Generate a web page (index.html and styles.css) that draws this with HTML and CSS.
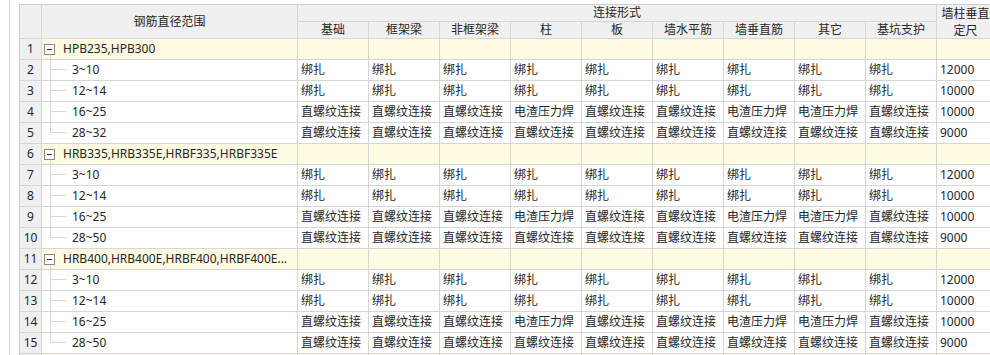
FILE: index.html
```html
<!DOCTYPE html>
<html lang="zh">
<head>
<meta charset="utf-8">
<title>钢筋连接设置</title>
<link rel="stylesheet" href="styles.css">
</head>
<body>
<div class="page">
  <div class="divider"></div>
  <div class="grid">
    <div class="c h corner"></div>
    <div class="c h htree">钢筋直径范围</div>
    <div class="c h hgroup">连接形式</div>
    <div class="c h hlast">墙柱垂直定尺</div>
    <div class="c h">基础</div>
    <div class="c h">框架梁</div>
    <div class="c h">非框架梁</div>
    <div class="c h">柱</div>
    <div class="c h">板</div>
    <div class="c h">墙水平筋</div>
    <div class="c h">墙垂直筋</div>
    <div class="c h">其它</div>
    <div class="c h">基坑支护</div>

    <!-- group 1 -->
    <div class="c n">1</div>
    <div class="c g tg"><span class="box"></span><span class="gt">HPB235,HPB300</span></div>
    <div class="c g"></div><div class="c g"></div><div class="c g"></div><div class="c g"></div><div class="c g"></div><div class="c g"></div><div class="c g"></div><div class="c g"></div><div class="c g"></div><div class="c g"></div>

    <div class="c n">2</div><div class="c t">3~10</div>
    <div class="c">绑扎</div><div class="c">绑扎</div><div class="c">绑扎</div><div class="c">绑扎</div><div class="c">绑扎</div><div class="c">绑扎</div><div class="c">绑扎</div><div class="c">绑扎</div><div class="c">绑扎</div><div class="c">12000</div>

    <div class="c n">3</div><div class="c t">12~14</div>
    <div class="c">绑扎</div><div class="c">绑扎</div><div class="c">绑扎</div><div class="c">绑扎</div><div class="c">绑扎</div><div class="c">绑扎</div><div class="c">绑扎</div><div class="c">绑扎</div><div class="c">绑扎</div><div class="c">10000</div>

    <div class="c n">4</div><div class="c t">16~25</div>
    <div class="c">直螺纹连接</div><div class="c">直螺纹连接</div><div class="c">直螺纹连接</div><div class="c">电渣压力焊</div><div class="c">直螺纹连接</div><div class="c">直螺纹连接</div><div class="c">电渣压力焊</div><div class="c">电渣压力焊</div><div class="c">直螺纹连接</div><div class="c">10000</div>

    <div class="c n">5</div><div class="c t last">28~32</div>
    <div class="c">直螺纹连接</div><div class="c">直螺纹连接</div><div class="c">直螺纹连接</div><div class="c">直螺纹连接</div><div class="c">直螺纹连接</div><div class="c">直螺纹连接</div><div class="c">直螺纹连接</div><div class="c">直螺纹连接</div><div class="c">直螺纹连接</div><div class="c">9000</div>

    <!-- group 2 -->
    <div class="c n">6</div>
    <div class="c g tg"><span class="box"></span><span class="gt">HRB335,HRB335E,HRBF335,HRBF335E</span></div>
    <div class="c g"></div><div class="c g"></div><div class="c g"></div><div class="c g"></div><div class="c g"></div><div class="c g"></div><div class="c g"></div><div class="c g"></div><div class="c g"></div><div class="c g"></div>

    <div class="c n">7</div><div class="c t">3~10</div>
    <div class="c">绑扎</div><div class="c">绑扎</div><div class="c">绑扎</div><div class="c">绑扎</div><div class="c">绑扎</div><div class="c">绑扎</div><div class="c">绑扎</div><div class="c">绑扎</div><div class="c">绑扎</div><div class="c">12000</div>

    <div class="c n">8</div><div class="c t">12~14</div>
    <div class="c">绑扎</div><div class="c">绑扎</div><div class="c">绑扎</div><div class="c">绑扎</div><div class="c">绑扎</div><div class="c">绑扎</div><div class="c">绑扎</div><div class="c">绑扎</div><div class="c">绑扎</div><div class="c">10000</div>

    <div class="c n">9</div><div class="c t">16~25</div>
    <div class="c">直螺纹连接</div><div class="c">直螺纹连接</div><div class="c">直螺纹连接</div><div class="c">电渣压力焊</div><div class="c">直螺纹连接</div><div class="c">直螺纹连接</div><div class="c">电渣压力焊</div><div class="c">电渣压力焊</div><div class="c">直螺纹连接</div><div class="c">10000</div>

    <div class="c n">10</div><div class="c t last">28~50</div>
    <div class="c">直螺纹连接</div><div class="c">直螺纹连接</div><div class="c">直螺纹连接</div><div class="c">直螺纹连接</div><div class="c">直螺纹连接</div><div class="c">直螺纹连接</div><div class="c">直螺纹连接</div><div class="c">直螺纹连接</div><div class="c">直螺纹连接</div><div class="c">9000</div>

    <!-- group 3 -->
    <div class="c n">11</div>
    <div class="c g tg"><span class="box"></span><span class="gt">HRB400,HRB400E,HRBF400,HRBF400E...</span></div>
    <div class="c g"></div><div class="c g"></div><div class="c g"></div><div class="c g"></div><div class="c g"></div><div class="c g"></div><div class="c g"></div><div class="c g"></div><div class="c g"></div><div class="c g"></div>

    <div class="c n">12</div><div class="c t">3~10</div>
    <div class="c">绑扎</div><div class="c">绑扎</div><div class="c">绑扎</div><div class="c">绑扎</div><div class="c">绑扎</div><div class="c">绑扎</div><div class="c">绑扎</div><div class="c">绑扎</div><div class="c">绑扎</div><div class="c">12000</div>

    <div class="c n">13</div><div class="c t">12~14</div>
    <div class="c">绑扎</div><div class="c">绑扎</div><div class="c">绑扎</div><div class="c">绑扎</div><div class="c">绑扎</div><div class="c">绑扎</div><div class="c">绑扎</div><div class="c">绑扎</div><div class="c">绑扎</div><div class="c">10000</div>

    <div class="c n">14</div><div class="c t">16~25</div>
    <div class="c">直螺纹连接</div><div class="c">直螺纹连接</div><div class="c">直螺纹连接</div><div class="c">电渣压力焊</div><div class="c">直螺纹连接</div><div class="c">直螺纹连接</div><div class="c">电渣压力焊</div><div class="c">电渣压力焊</div><div class="c">直螺纹连接</div><div class="c">10000</div>

    <div class="c n">15</div><div class="c t last">28~50</div>
    <div class="c">直螺纹连接</div><div class="c">直螺纹连接</div><div class="c">直螺纹连接</div><div class="c">直螺纹连接</div><div class="c">直螺纹连接</div><div class="c">直螺纹连接</div><div class="c">直螺纹连接</div><div class="c">直螺纹连接</div><div class="c">直螺纹连接</div><div class="c">9000</div>

    <!-- next group row, only its top edge is in view -->
    <div class="c n"></div>
    <div class="c g"></div>
    <div class="c g"></div><div class="c g"></div><div class="c g"></div><div class="c g"></div><div class="c g"></div><div class="c g"></div><div class="c g"></div><div class="c g"></div><div class="c g"></div><div class="c g"></div>
  </div>
</div>
</body>
</html>
```

FILE: styles.css
```css
html, body {
  margin: 0;
  padding: 0;
  background: #ffffff;
  overflow: hidden;
}

.page {
  display: flex;
  height: 355px;
  overflow: hidden;
  font-family: "Noto Sans", "Noto Sans CJK SC", sans-serif;
  font-size: 12px;
  color: #262626;
}

.divider {
  width: 1px;
  margin-left: 9px;
  background: #d6d6d6;
  flex-shrink: 0;
}

.grid {
  flex-shrink: 0;
  align-self: flex-start;
  margin: 4px 0 0 9px;
  display: grid;
  grid-template-columns: 22px 256px repeat(9, 71px) 58px;
  grid-template-rows: 17px 17px;
  grid-auto-rows: 21px;
  border-left: 1px solid #cfcfcf;
  border-top: 1px solid #cfcfcf;
}

.c {
  box-sizing: border-box;
  border-right: 1px solid #d6d6d6;
  border-bottom: 1px solid #d6d6d6;
  line-height: 20px;
  padding-left: 3px;
  white-space: nowrap;
  overflow: hidden;
}

.h {
  background: #f0f0f0;
  padding: 0;
  display: flex;
  align-items: center;
  justify-content: center;
  line-height: 16px;
  text-align: center;
}

.corner,
.htree {
  grid-row: span 2;
}

.hgroup {
  grid-column: span 9;
}

.hlast {
  grid-row: span 2;
  white-space: normal;
  padding: 0 2px;
  justify-content: center;
  line-height: 17px;
}

.n {
  background: #f0f0f0;
  padding: 0;
  text-align: center;
}

.g {
  background: #fffbe3;
}

.tg {
  position: relative;
  display: flex;
  align-items: center;
  padding-left: 2px;
  padding-right: 2px;
}

.tg::after {
  content: "";
  position: absolute;
  left: 8px;
  top: 16px;
  bottom: -1px;
  width: 1px;
  background: #d6d6d6;
}

.box {
  position: relative;
  flex-shrink: 0;
  box-sizing: border-box;
  width: 11px;
  height: 11px;
  border: 1px solid #8a8a8a;
  background: #ffffff;
  margin-right: 8px;
}

.box::before {
  content: "";
  position: absolute;
  left: 2px;
  top: 4px;
  width: 5px;
  height: 1px;
  background: #333333;
}

.gt {
  white-space: nowrap;
}

.t {
  position: relative;
  padding-left: 30px;
  overflow: visible;
}

.t::before {
  content: "";
  position: absolute;
  left: 8px;
  top: -1px;
  bottom: -1px;
  width: 1px;
  background: #d6d6d6;
}

.t.last::before {
  bottom: auto;
  height: 11px;
}

.t::after {
  content: "";
  position: absolute;
  left: 9px;
  top: 9px;
  width: 15px;
  height: 1px;
  background: #d6d6d6;
}
```
